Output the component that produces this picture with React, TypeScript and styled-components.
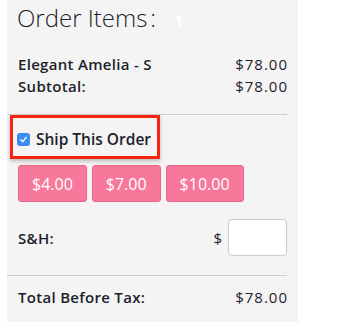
import React from "react";
import styled, { createGlobalStyle } from "styled-components";

const GlobalStyle = createGlobalStyle`
  body {
    margin: 0;
    background: #ffffff;
    font-family: "Open Sans", "Liberation Sans", sans-serif;
    color: #1c1f2c;
  }
`;

const Panel = styled("div")`
  margin-left: 7px;
  width: 291px;
  box-sizing: border-box;
  background: #f4f4f4;
  padding: 3px 11px 14px 11px;
  display: flex;
  flex-direction: column;
`;

const Title = styled("h2")`
  margin: 0 0 0 -1px;
  font-size: 24px;
  font-weight: 300;
  line-height: 30px;
  display: flex;
  align-items: baseline;
`;

const Colon = styled("span")`
  margin-left: 3px;
`;

const Count = styled("span")`
  margin-left: 18px;
  font-size: 16px;
  font-weight: 700;
  color: #ffffff;
`;

const Lines = styled("div")`
  margin-top: 17px;
  display: flex;
  flex-direction: column;
`;

const Row = styled("div")<{ $tall?: boolean }>`
  display: flex;
  justify-content: space-between;
  align-items: center;
  font-size: 15px;
  line-height: 22px;
  min-height: ${(p) => (p.$tall ? "37px" : "22px")};
`;

const Label = styled("span")`
  font-weight: 600;
  letter-spacing: 0.3px;
`;

const Amount = styled("span")`
  font-weight: 400;
  letter-spacing: 1px;
  margin-right: -1px;
`;

const Divider = styled("hr")<{ $gap: number }>`
  border: none;
  border-top: 1px solid #cfcfcf;
  margin: ${(p) => p.$gap}px 0 0 -11px;
  width: 280px;
`;

const Highlight = styled("div")`
  margin-left: -8px;
  width: 150px;
  height: 44px;
  box-sizing: border-box;
  border: 3px solid #f5260f;
  box-shadow: 0 2px 4px rgba(0, 0, 0, 0.25);
  display: flex;
  align-items: center;
  padding: 4px 0 0 4px;
  gap: 6px;
`;

const Check = styled("span")`
  width: 13px;
  height: 13px;
  border-radius: 3px;
  background: #3a8cf0;
  display: inline-flex;
  align-items: center;
  justify-content: center;
`;

const CheckText = styled("span")`
  font-size: 15.5px;
  font-weight: 600;
`;

const Buttons = styled("div")`
  margin-top: 6px;
  display: flex;
  gap: 5px;
`;

const RateButton = styled("button")`
  height: 37px;
  padding: 0 13px;
  border: 1px solid #ec6589;
  border-radius: 3px;
  background: #f7789a;
  color: #ffffff;
  font-family: "Open Sans", "Liberation Sans", sans-serif;
  font-size: 16px;
  font-weight: 500;
`;

const HandlingRow = styled(Row)`
  margin-top: 17px;
`;

const InputWrap = styled("span")`
  display: flex;
  align-items: center;
  gap: 6px;
  font-size: 15px;
`;

const AmountInput = styled("input")`
  width: 59px;
  height: 37px;
  box-sizing: border-box;
  border: 1px solid #cccccc;
  border-radius: 4px;
  background: #ffffff;
  outline: none;
`;

const TotalRow = styled(Row)`
  margin-top: 10px;
`;

export default function App() {
  return (
    <>
      <GlobalStyle />
      <Panel>
        <Title>
          Order Items<Colon>:</Colon>
          <Count>1</Count>
        </Title>
        <Lines>
          <Row>
            <Label>Elegant Amelia - S</Label>
            <Amount>$78.00</Amount>
          </Row>
          <Row>
            <Label>Subtotal:</Label>
            <Amount>$78.00</Amount>
          </Row>
        </Lines>
        <Divider $gap={17} />
        <Highlight>
          <Check>
            <svg width="9" height="9" viewBox="0 0 10 10">
              <path d="M2 5.2 L4.2 7.4 L8.2 2.4" fill="none" stroke="#fff" strokeWidth="1.5" strokeLinecap="round" strokeLinejoin="round" />
            </svg>
          </Check>
          <CheckText>Ship This Order</CheckText>
        </Highlight>
        <Buttons>
          {["$4.00", "$7.00", "$10.00"].map((v) => (
            <RateButton key={v}>{v}</RateButton>
          ))}
        </Buttons>
        <HandlingRow $tall>
          <Label>S&amp;H:</Label>
          <InputWrap>
            $<AmountInput type="text" />
          </InputWrap>
        </HandlingRow>
        <Divider $gap={19} />
        <TotalRow>
          <Label>Total Before Tax:</Label>
          <Amount>$78.00</Amount>
        </TotalRow>
      </Panel>
    </>
  );
}
